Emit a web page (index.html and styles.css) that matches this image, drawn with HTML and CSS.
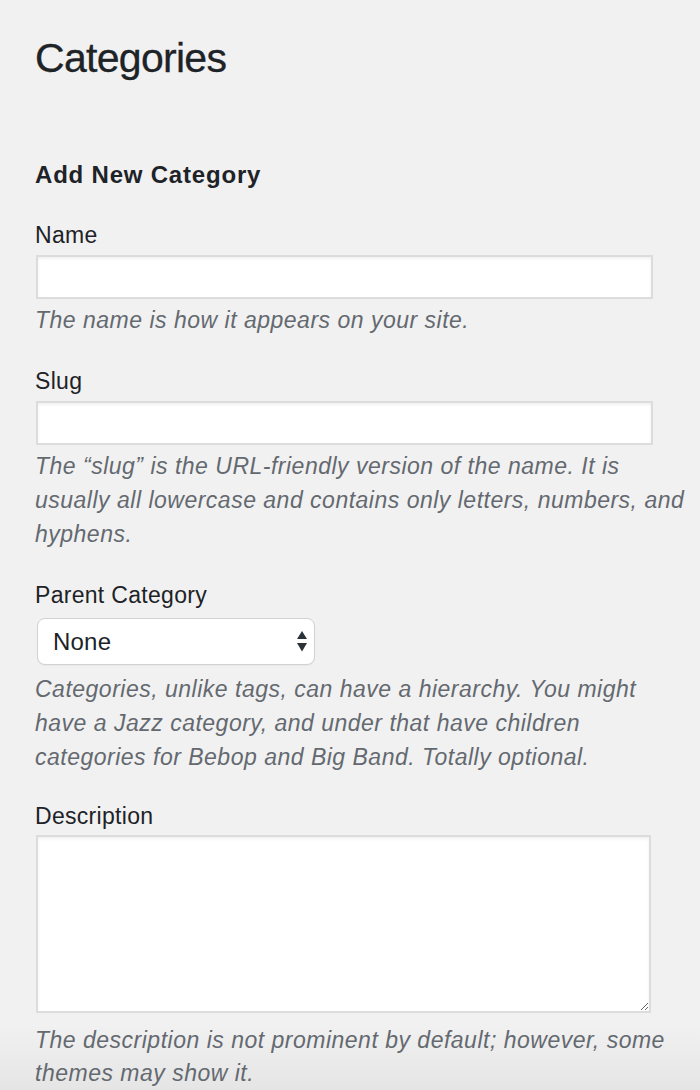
FILE: index.html
```
<!DOCTYPE html>
<html lang="en">
<head>
<meta charset="utf-8">
<title>Categories</title>
<link rel="stylesheet" href="styles.css">
</head>
<body>
<div class="wrap">
  <h1 class="page-title">Categories</h1>
  <h2 class="section-title">Add New Category</h2>
  <form class="cat-form">
    <label class="field-label" for="tag-name">Name</label>
    <input class="text-input" id="tag-name" type="text">
    <p class="field-desc">The name is how it appears on your site.</p>

    <label class="field-label" for="tag-slug">Slug</label>
    <input class="text-input" id="tag-slug" type="text">
    <p class="field-desc">The “slug” is the URL-friendly version of the name. It is usually all lowercase and contains only letters, numbers, and hyphens.</p>

    <label class="field-label" for="parent">Parent Category</label>
    <div class="select-wrap">
      <select class="select-input" id="parent">
        <option>None</option>
      </select>
      <svg class="select-arrows" width="10" height="22" viewBox="0 0 10 22" aria-hidden="true">
        <polygon points="5,0 10,8 0,8" fill="#2c3338"/>
        <polygon points="0,12 10,12 5,20.5" fill="#2c3338"/>
      </svg>
    </div>
    <p class="field-desc field-desc-select">Categories, unlike tags, can have a hierarchy. You might have a Jazz category, and under that have children categories for Bebop and Big Band. Totally optional.</p>

    <label class="field-label field-label-desc" for="tag-description">Description</label>
    <textarea class="text-area" id="tag-description"></textarea>
    <p class="field-desc field-desc-area">The description is not prominent by default; however, some themes may show it.</p>
  </form>
</div>
</body>
</html>
```
FILE: styles.css
```
html {
  min-height: 100%;
  background-color: #e6e6e6;
  background-image: linear-gradient(to bottom, #f1f1f1 0, #f1f1f1 1025px, #e5e5e5 1090px);
  background-repeat: no-repeat;
}

body {
  margin: 0;
  font-family: "Liberation Sans", Arial, sans-serif;
  color: #1d2327;
}

.wrap {
  padding: 34px 0 0 35px;
  width: 655px;
}

.page-title {
  margin: 0;
  font-size: 41px;
  line-height: 48px;
  font-weight: 400;
  letter-spacing: -0.7px;
  color: #1d2327;
  -webkit-text-stroke: 0.3px #1d2327;
}

.section-title {
  margin: 77px 0 0;
  font-size: 24px;
  line-height: 32px;
  font-weight: 700;
  letter-spacing: 0.8px;
  color: #1d2327;
}

.cat-form {
  display: flex;
  flex-direction: column;
  align-items: flex-start;
}

.field-label {
  display: block;
  margin-top: 27px;
  font-size: 23px;
  line-height: 34px;
  letter-spacing: 0.3px;
  color: #1d2327;
}

.field-label-desc {
  margin-top: 25px;
}

.text-input {
  box-sizing: border-box;
  display: block;
  width: 617px;
  height: 44px;
  margin: 3px 0 0 1px;
  padding: 0 10px;
  border: 2px solid #dcdcdc;
  border-radius: 0;
  background: #fff;
  box-shadow: inset 0 2px 3px rgba(0, 0, 0, 0.06);
  font: 23px "Liberation Sans", Arial, sans-serif;
  outline: none;
}

.field-desc {
  margin: 4px 0 0;
  font-size: 23px;
  line-height: 34px;
  font-style: italic;
  letter-spacing: 0.5px;
  color: #646970;
}

.field-desc-select {
  margin-top: 7px;
}

.field-desc-area {
  margin-top: 11px;
  line-height: 33px;
}

.select-wrap {
  position: relative;
  margin: 6px 0 0 2px;
  width: 278px;
  height: 47px;
}

.select-input {
  -webkit-appearance: none;
  appearance: none;
  box-sizing: border-box;
  display: block;
  width: 278px;
  height: 47px;
  margin: 0;
  padding: 0 40px 0 15px;
  border: 1.5px solid #d2d2d2;
  border-radius: 8px;
  background: #fff;
  box-shadow: 0 1px 1px rgba(0, 0, 0, 0.04);
  font: 24px "Liberation Sans", Arial, sans-serif;
  letter-spacing: 0.2px;
  color: #1d2327;
  outline: none;
}

.select-arrows {
  position: absolute;
  left: 260px;
  top: 13px;
  pointer-events: none;
}

.text-area {
  box-sizing: border-box;
  display: block;
  width: 615px;
  height: 178px;
  margin: 2px 0 0 1px;
  padding: 6px 10px;
  border: 2px solid #dcdcdc;
  border-radius: 0;
  background: #fff;
  box-shadow: inset 0 2px 3px rgba(0, 0, 0, 0.06);
  font: 23px "Liberation Sans", Arial, sans-serif;
  outline: none;
  resize: vertical;
}
```
